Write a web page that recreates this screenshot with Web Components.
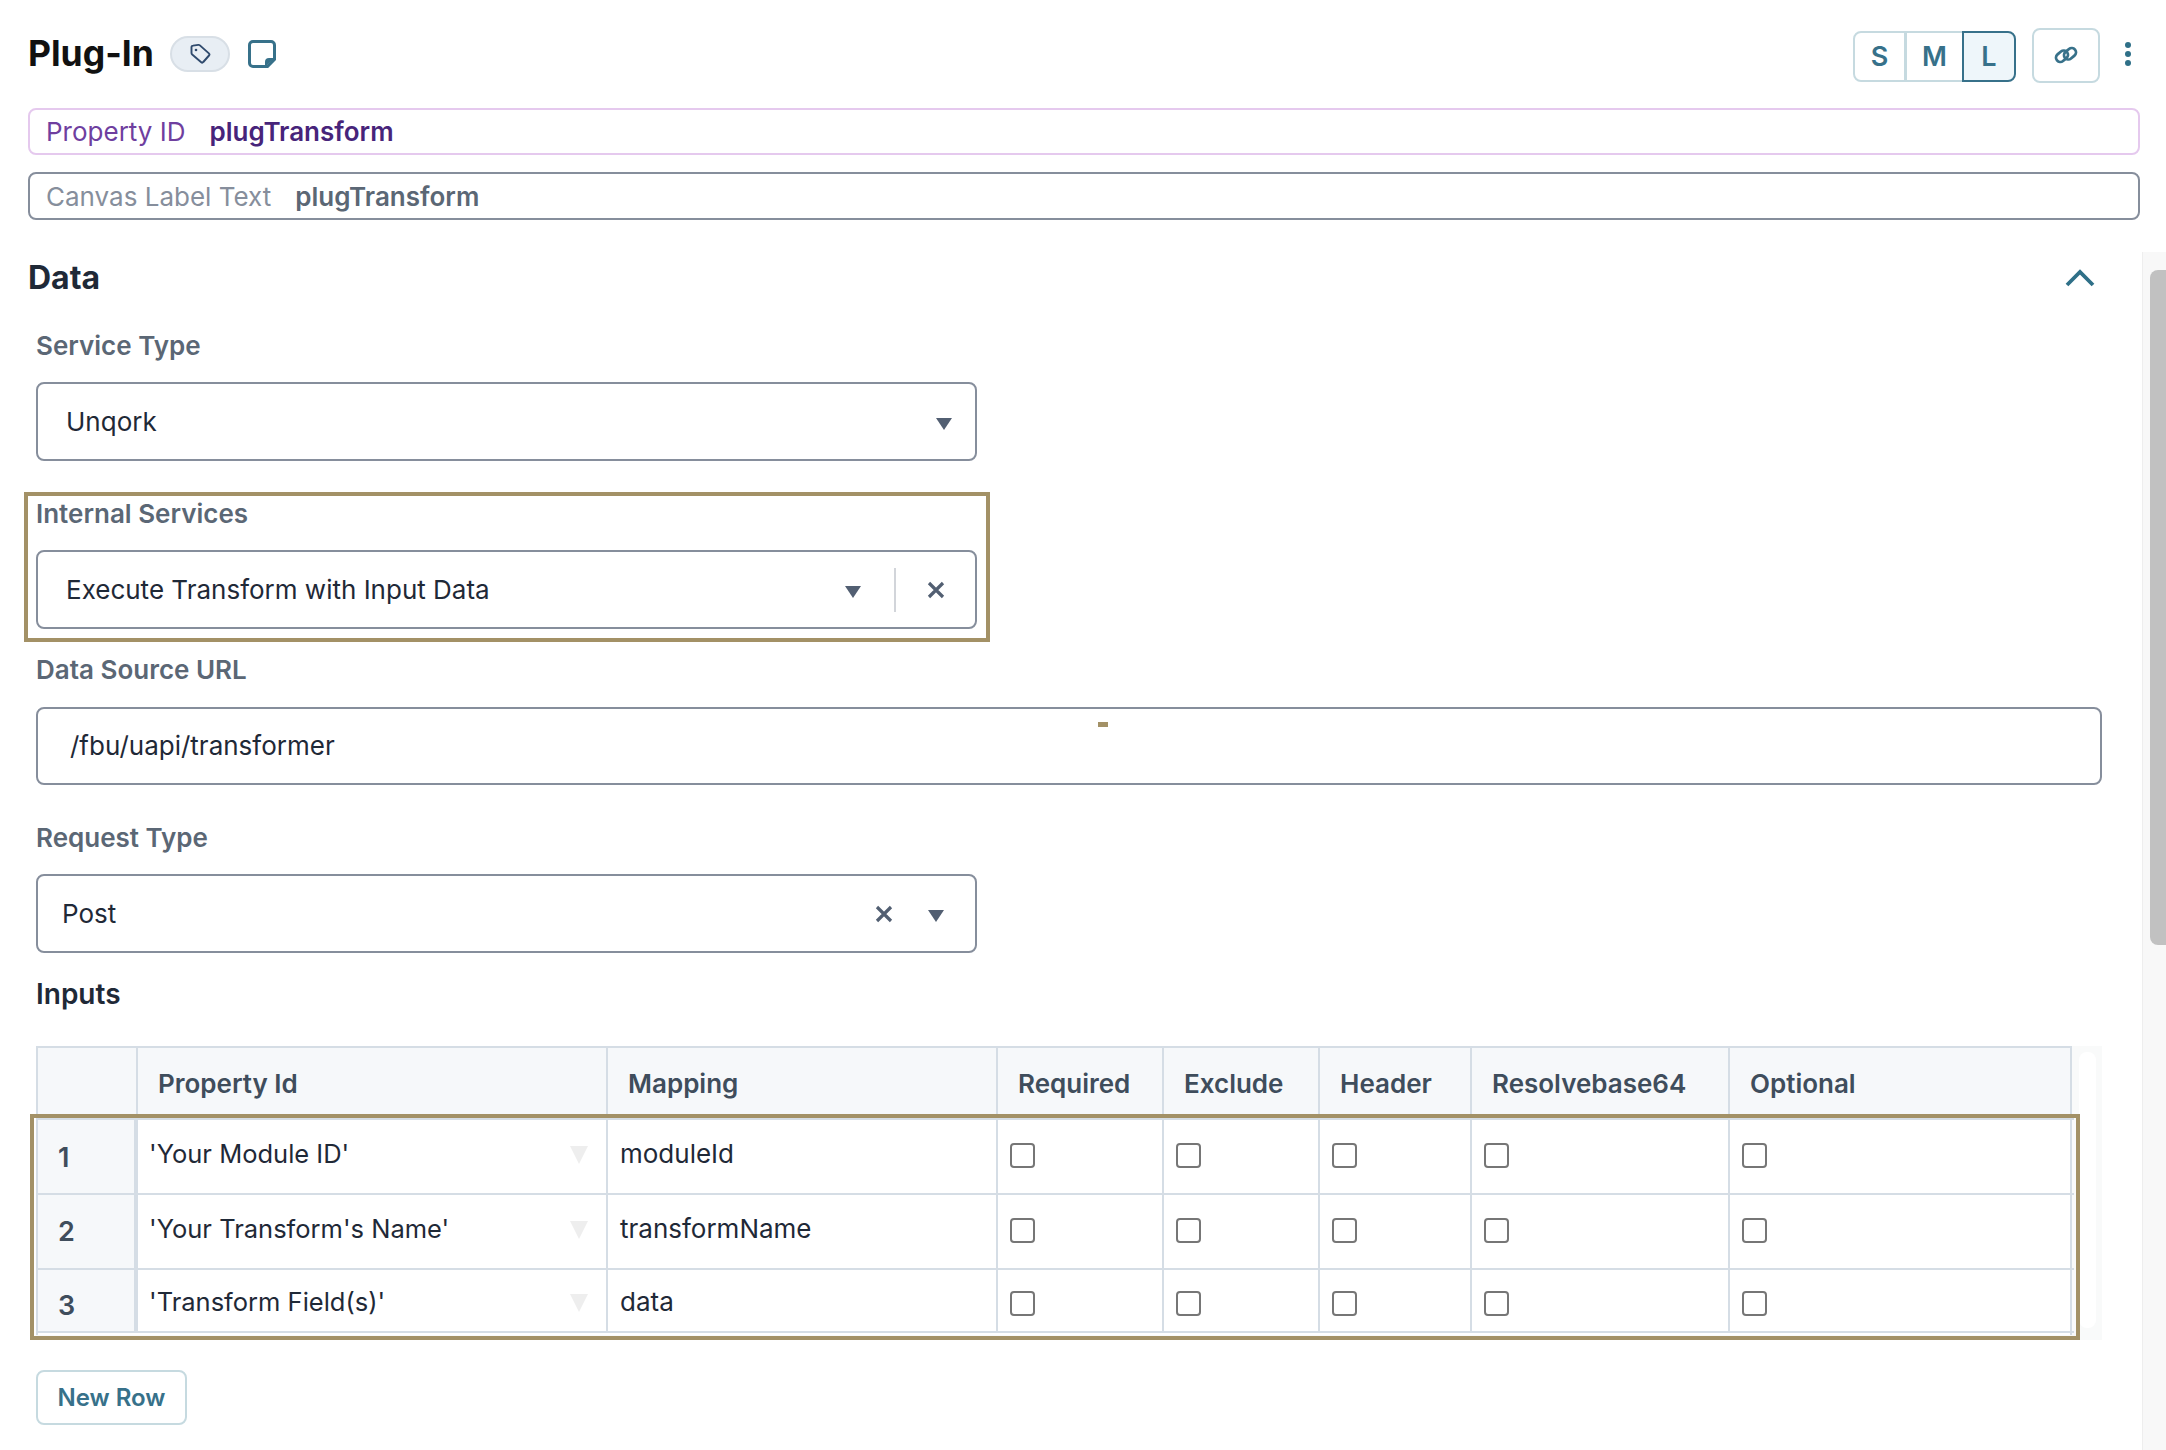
<!DOCTYPE html>
<html>
<head>
<meta charset="utf-8">
<title>Plug-In</title>
<style>
  html, body { margin: 0; height: 1450px; overflow: hidden; background: #fff; }
  body { font-family: Inter, "Liberation Sans", sans-serif; color: #1f2937; }
</style>
</head>
<body>
<plugin-editor></plugin-editor>
<script>
// column widths of the inputs table, shared by header and rows
const COLS = '100px 470px 390px 166px 156px 152px 258px 344px';

class SizeToggle extends HTMLElement {
  constructor() {
    super();
    this.attachShadow({ mode: 'open' });
    this.shadowRoot.innerHTML = `
      <style>
        :host { display: flex; height: 51px; box-sizing: border-box; font: 600 27px Inter, sans-serif; color: #37718a; }
        span { display: flex; align-items: center; justify-content: center; box-sizing: border-box; border: 2px solid #c6dae0; background: #fff; }
        .s { width: 54px; border-radius: 8px 0 0 8px; border-right-width: 3px; }
        .m { width: 55px; border-left: 0; border-right: 0; }
        .l { width: 54px; border: 2px solid #37718a; border-radius: 0 8px 8px 0; background: #eef6fa; }
      </style>
      <span class="s">S</span><span class="m">M</span><span class="l">L</span>`;
  }
}
customElements.define('size-toggle', SizeToggle);

class EditorHeader extends HTMLElement {
  constructor() {
    super();
    this.attachShadow({ mode: 'open' });
    this.shadowRoot.innerHTML = `
      <style>
        :host { display: flex; align-items: center; height: 56px; }
        h1 { margin: 0 0 3px; font: 700 35.500px/53px Inter, sans-serif; color: #111; }
        .pill { display: flex; align-items: center; justify-content: center; width: 60px; height: 36px; box-sizing: border-box; margin: -2px 0 0 16px; border: 2px solid #d8dfe6; border-radius: 18px; background: #e8eef4; }
        .note { display: block; margin: -2px 0 0 18px; }
        .grow { flex: 1; }
        .link { display: flex; align-items: center; justify-content: center; width: 68px; height: 55px; box-sizing: border-box; margin-left: 16px; border: 2px solid #c6dae0; border-radius: 8px; }
        .dots { display: block; margin: -2px 33px 0 23px; }
        size-toggle { margin-top: 2px; }
      </style>
      <h1>Plug-In</h1>
      <span class="pill">
        <svg width="22" height="22" viewBox="0 0 22 22" fill="none" stroke="#2f4a6d" stroke-width="1.900" stroke-linejoin="round">
          <path d="M2.500 4.300a1.600 1.600 0 0 1 1.500-1.700l5.300-.7a2 2 0 0 1 1.600.5l9 8a1.500 1.500 0 0 1 .1 2.100l-5.700 6.500a1.500 1.500 0 0 1-2.100.2l-9-7.600a2 2 0 0 1-.7-1.500z"/>
          <circle cx="7" cy="7" r="1.300" fill="#2f4a6d" stroke="none"/>
        </svg>
      </span>
      <svg class="note" width="28" height="28" viewBox="0 0 28 28" fill="none">
        <path d="M5 1.500h18A3.500 3.500 0 0 1 26.500 5v14.500l-7 7H5A3.500 3.500 0 0 1 1.500 23V5A3.500 3.500 0 0 1 5 1.500z" stroke="#37718a" stroke-width="3"/>
        <path d="M27 18h-6a4 4 0 0 0-4 4v5z" fill="#37718a"/>
      </svg>
      <span class="grow"></span>
      <size-toggle></size-toggle>
      <span class="link">
        <svg width="26" height="22" viewBox="0 0 26 22" fill="none" stroke="#37718a" stroke-width="2.800">
          <rect x="2.500" y="8" width="13" height="8.500" rx="4.250" transform="rotate(-40 9 12.250)"/>
          <rect x="10.500" y="5.500" width="13" height="8.500" rx="4.250" transform="rotate(-40 17 9.750)"/>
        </svg>
      </span>
      <svg class="dots" width="10" height="26" viewBox="0 0 10 26" fill="#2f7088">
        <circle cx="5" cy="4" r="3"/><circle cx="5" cy="13" r="3"/><circle cx="5" cy="22" r="3"/>
      </svg>`;
  }
}
customElements.define('editor-header', EditorHeader);

// read-only strip: label on the left, bold value after it
class IdStrip extends HTMLElement {
  constructor() {
    super();
    this.attachShadow({ mode: 'open' });
    this.shadowRoot.innerHTML = `
      <style>
        :host { display: flex; align-items: center; box-sizing: border-box; height: 48px; padding-left: 16px; border: 2px solid var(--line); border-radius: 8px; font: 400 26px Inter, sans-serif; color: var(--label); }
        b { margin-left: 24px; font-weight: 600; color: var(--value); }
      </style>
      <span></span><b></b>`;
  }
  connectedCallback() {
    this.shadowRoot.querySelector('span').textContent = this.getAttribute('label');
    this.shadowRoot.querySelector('b').textContent = this.getAttribute('value');
  }
}
customElements.define('id-strip', IdStrip);

class FieldLabel extends HTMLElement {
  constructor() {
    super();
    this.attachShadow({ mode: 'open' });
    this.shadowRoot.innerHTML = `
      <style>
        :host { display: block; margin-bottom: -2px; font: 600 26px/32px Inter, sans-serif; color: #5b6775; }
      </style>
      <slot></slot>`;
  }
}
customElements.define('field-label', FieldLabel);

class DataBox extends HTMLElement {
  constructor() {
    super();
    this.attachShadow({ mode: 'open' });
    this.shadowRoot.innerHTML = `
      <style>
        :host { display: flex; align-items: center; box-sizing: border-box; height: 79px; padding-left: var(--pad, 28px); padding-right: 22px; border: 2px solid #868e9c; border-radius: 8px; font: 400 26px Inter, sans-serif; color: #1f2937; }
        .text { flex: 1; margin-top: var(--shift, 0); }
        .tools { display: flex; align-items: center; }
        svg { display: block; }
      </style>
      <span class="text"><slot></slot></span>
      <span class="tools"></span>`;
  }
  connectedCallback() {
    const arrow = `<svg class="arrow" width="18" height="14" viewBox="0 0 18 14" fill="#525f72"><path d="M1 1h16L9 13z"/></svg>`;
    const cross = `<svg width="18" height="18" viewBox="0 0 18 18" stroke="#525f72" stroke-width="3.200" fill="none"><path d="M2 2l14 14M16 2L2 16"/></svg>`;
    const kind = this.getAttribute('kind');
    const tools = this.shadowRoot.querySelector('.tools');
    if (kind === 'select') tools.innerHTML = `<span style="margin:4px 0 0 0">${arrow}</span>`;
    if (kind === 'divider') {
      tools.innerHTML = `<span style="margin:4px 0 0 0">${arrow}</span><span style="width:2px;height:44px;background:#d2d5da;margin:0 31px 0 32px"></span><span style="margin-right:8px">${cross}</span>`;
    }
    if (kind === 'clear') tools.innerHTML = `<span style="margin-right:34px">${cross}</span><span style="margin:4px 8px 0 0">${arrow}</span>`;
  }
}
customElements.define('data-box', DataBox);

// gold marker drawn on top of whatever it wraps
class GoldMark extends HTMLElement {
  constructor() {
    super();
    this.attachShadow({ mode: 'open' });
    this.shadowRoot.innerHTML = `
      <style>
        :host { display: block; position: relative; }
        i { position: absolute; top: var(--top); left: var(--left); right: var(--right); bottom: var(--bottom); border: 4px solid #a39166; pointer-events: none; }
      </style>
      <slot></slot><i></i>`;
  }
}
customElements.define('gold-mark', GoldMark);

class InputHead extends HTMLElement {
  constructor() {
    super();
    this.attachShadow({ mode: 'open' });
    const names = ['', 'Property Id', 'Mapping', 'Required', 'Exclude', 'Header', 'Resolvebase64', 'Optional'];
    this.shadowRoot.innerHTML = `
      <style>
        :host { display: grid; grid-template-columns: ${COLS}; height: 72px; background: #f6f8fa; font: 600 26px Inter, sans-serif; color: #3f4d5c; }
        div { display: flex; align-items: center; box-sizing: border-box; padding: 2px 0 0 20px; border-right: 2px solid #d5dde5; border-bottom: 3px solid #d5dde5; }
        div:first-child { border-right-width: 4px; }
        div:last-child { border-right: 0; }
      </style>
      ${names.map(n => `<div>${n}</div>`).join('')}`;
  }
}
customElements.define('input-head', InputHead);

class InputRow extends HTMLElement {
  constructor() {
    super();
    this.attachShadow({ mode: 'open' });
    this.shadowRoot.innerHTML = `
      <style>
        :host { display: grid; grid-template-columns: ${COLS}; height: var(--h, 75px); font: 400 26px Inter, sans-serif; color: #1f2937; }
        .cell { box-sizing: border-box; padding-top: var(--tp, 18px); border-right: 2px solid #d5dde5; border-bottom: 2px solid #d5dde5; line-height: 32px; }
        .cell:last-child { border-right: 0; }
        .idx { padding: var(--ip, 22px) 0 0 20px; background: #f6f8fa; border-right-width: 4px; font-size: 27px; font-weight: 600; color: #3f4d5c; }
        .prop { display: flex; padding-left: 11px; font-size: 25.500px; }
        .prop span { flex: 1; }
        .prop svg { margin: 8px 18px 0 0; }
        .map { padding-left: 12px; }
        .chk { padding: var(--cp, 23px) 0 0 12px; }
        .chk u { display: block; width: 25px; height: 25px; box-sizing: border-box; border: 2px solid #767676; border-radius: 4px; background: #fff; }
      </style>
      <div class="cell idx"></div>
      <div class="cell prop"><span></span><svg width="18" height="18" viewBox="0 0 18 18" fill="#eeeeee"><path d="M0 0h18L9 18z"/></svg></div>
      <div class="cell map"></div>
      <div class="cell chk"><u></u></div><div class="cell chk"><u></u></div><div class="cell chk"><u></u></div><div class="cell chk"><u></u></div><div class="cell chk"><u></u></div>`;
  }
  connectedCallback() {
    const root = this.shadowRoot;
    root.querySelector('.idx').textContent = this.getAttribute('index');
    root.querySelector('.prop span').textContent = this.getAttribute('prop');
    root.querySelector('.map').textContent = this.getAttribute('map');
  }
}
customElements.define('input-row', InputRow);

class InputsTable extends HTMLElement {
  constructor() {
    super();
    this.attachShadow({ mode: 'open' });
    this.shadowRoot.innerHTML = `
      <style>
        :host { display: flex; width: 2066px; height: 294px; background: #f9fafa; }
        .tbl { width: 2036px; height: 289px; box-sizing: border-box; border: 2px solid #d5dde5; border-bottom: 0; background: #fff; }
        gold-mark { height: 294px; }
        .thumb { width: 17px; height: 276px; margin: 6px 0 0 7px; border-radius: 8px; background: #fff; }
      </style>
      <gold-mark style="--right:-8px;--left:-6px;--top:68px;--bottom:0">
        <div class="tbl">
          <input-head></input-head>
          <input-row index="1" prop="'Your Module ID'" map="moduleId"></input-row>
          <input-row index="2" prop="'Your Transform's Name'" map="transformName" style="--ip:21px"></input-row>
          <input-row index="3" prop="'Transform Field(s)'" map="data" style="--h:63px;--tp:16px;--cp:21px;--ip:20px"></input-row>
        </div>
      </gold-mark>
      <div class="thumb"></div>`;
  }
}
customElements.define('inputs-table', InputsTable);

class ScrollTrack extends HTMLElement {
  constructor() {
    super();
    this.attachShadow({ mode: 'open' });
    this.shadowRoot.innerHTML = `
      <style>
        :host { display: block; width: 24px; background: #f8f8f8; border-left: 1px solid #eeeeee; box-sizing: border-box; }
        i { display: block; width: 16px; height: 675px; margin: 18px 0 0 7px; border-radius: 8px 0 0 8px; background: #c1c1c1; }
      </style>
      <i></i>`;
  }
}
customElements.define('scroll-track', ScrollTrack);

class DataPanel extends HTMLElement {
  constructor() {
    super();
    this.attachShadow({ mode: 'open' });
    this.shadowRoot.innerHTML = `
      <style>
        :host { display: flex; height: 1198px; margin-top: 32px; }
        .body { flex: 1; padding-left: 36px; }
        .head { display: flex; align-items: center; justify-content: space-between; height: 36px; margin: 8px 0 34px -8px; padding-right: 47px; }
        h2 { margin: 0; font: 700 32px/36px Inter, sans-serif; color: #1f2937; }
        .gap { height: 22px; }
        .half { width: 941px; }
        .wide { width: 2066px; position: relative; }
        .dash { position: absolute; left: 1062px; top: 15px; width: 10px; height: 5px; background: #a39166; }
        .f1 { margin-top: 37px; --top: -6px; --left: -12px; --right: -13px; --bottom: -13px; }
        .f2 { margin-top: 25px; }
        .gap2 { height: 23px; }
        .f3 { margin-top: 37px; }
        .gap3 { height: 22px; }
        .f4 { margin-top: 25px; font-size: 28px; color: #1f2937; }
        .tableTop { margin-top: 38px; }
        button { display: block; width: 151px; height: 55px; margin-top: 30px; padding: 0; box-sizing: border-box; border: 2px solid #c6dae0; border-radius: 8px; background: #fff; font: 600 24px Inter, sans-serif; color: #37718a; }
        svg { display: block; }
      </style>
      <div class="body">
        <div class="head">
          <h2>Data</h2>
          <svg width="30" height="18" viewBox="0 0 30 18" fill="none" stroke="#2f7088" stroke-width="3.800"><path d="M2 16L15 3l13 13"/></svg>
        </div>
        <field-label>Service Type</field-label>
        <div class="gap"></div>
        <data-box class="half" kind="select" style="--pad:28px">Unqork</data-box>
        <gold-mark class="half f1">
          <field-label>Internal Services</field-label>
          <div class="gap"></div>
          <data-box kind="divider" style="--pad:28px">Execute Transform with Input Data</data-box>
        </gold-mark>
        <field-label class="f2">Data Source URL</field-label>
        <div class="gap2"></div>
        <div class="wide"><data-box style="--pad:32px;--shift:-2px;height:78px">/fbu/uapi/transformer</data-box><span class="dash"></span></div>
        <field-label class="f3">Request Type</field-label>
        <div class="gap3"></div>
        <data-box class="half" kind="clear" style="--pad:24px">Post</data-box>
        <field-label class="f4">Inputs</field-label>
        <inputs-table class="tableTop"></inputs-table>
        <button>New Row</button>
      </div>
      <scroll-track></scroll-track>`;
  }
}
customElements.define('data-panel', DataPanel);

class PluginEditor extends HTMLElement {
  constructor() {
    super();
    this.attachShadow({ mode: 'open' });
    this.shadowRoot.innerHTML = `
      <style>
        :host { display: block; width: 2166px; padding-top: 27px; box-sizing: border-box; }
        .top { padding-left: 28px; }
        .strips { display: flex; flex-direction: column; gap: 17px; width: 2112px; margin: 25px 0 0 28px; }
        .prop { height: 47px; --line: #e5c9ee; --label: #6f3f9f; --value: #47247a; }
        .canvas { --line: #868e9c; --label: #868e9c; --value: #5b6775; }
      </style>
      <editor-header class="top"></editor-header>
      <div class="strips">
        <id-strip class="prop" label="Property ID" value="plugTransform"></id-strip>
        <id-strip class="canvas" label="Canvas Label Text" value="plugTransform"></id-strip>
      </div>
      <data-panel></data-panel>`;
  }
}
customElements.define('plugin-editor', PluginEditor);
</script>
</body>
</html>
